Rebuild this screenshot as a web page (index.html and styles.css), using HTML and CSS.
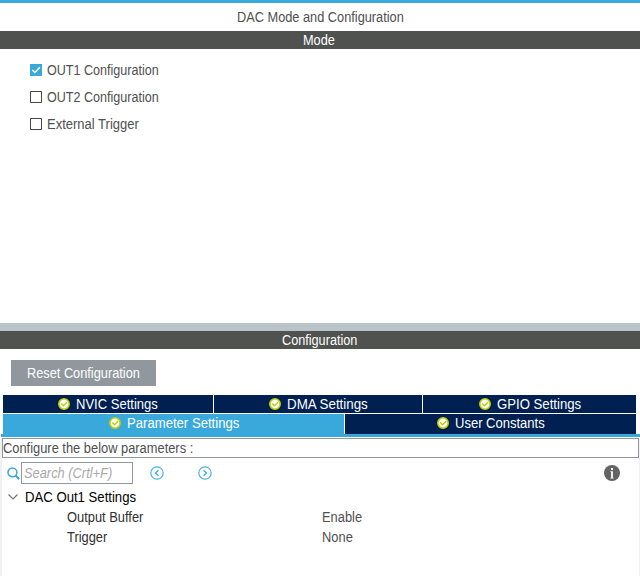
FILE: index.html
```html
<!DOCTYPE html>
<html lang="en">
<head>
<meta charset="utf-8">
<title>DAC Mode and Configuration</title>
<link rel="stylesheet" href="styles.css">
</head>
<body>
<svg class="defs" width="0" height="0">
  <symbol id="ok" viewBox="0 0 12 12"><circle cx="6" cy="6" r="5.2" fill="#fff" stroke="#bccf00" stroke-width="1.6"/><path d="M3.2 5.4 5.5 7.7 9 4.3" fill="none" stroke="#bccf00" stroke-width="1.4"/></symbol>
</svg>
<main class="panel">
  <h1 class="title"><span>DAC Mode and Configuration</span></h1>
  <h2 class="bar bar-mode"><span>Mode</span></h2>
  <section class="mode">
    <label class="option out"><svg class="box" viewBox="0 0 12 12"><path fill="#39a9dc" d="M0 0h12v12H0z"/><path d="m2.3 6 2.5 2.5L9.8 3.4" fill="none" stroke="#fff" stroke-width="1.5"/></svg><span>OUT1 Configuration</span></label>
    <label class="option out"><svg class="box" viewBox="0 0 12 12"><path fill="#fff" stroke="#464646" d="M.5.5h11v11H.5z"/></svg><span>OUT2 Configuration</span></label>
    <label class="option ext"><svg class="box" viewBox="0 0 12 12"><path fill="#fff" stroke="#464646" d="M.5.5h11v11H.5z"/></svg><span>External Trigger</span></label>
  </section>
  <div class="splitter"></div>
  <h2 class="bar bar-config"><span>Configuration</span></h2>
  <section class="config">
    <button class="reset"><span>Reset Configuration</span></button>
    <nav class="tabs">
      <div class="row row-top">
        <div class="tab nvic"><svg class="ok"><use href="#ok"/></svg><span>NVIC Settings</span></div>
        <div class="tab dma"><svg class="ok"><use href="#ok"/></svg><span>DMA Settings</span></div>
        <div class="tab gpio"><svg class="ok"><use href="#ok"/></svg><span>GPIO Settings</span></div>
      </div>
      <div class="row row-bottom">
        <div class="tab param"><svg class="ok"><use href="#ok"/></svg><span>Parameter Settings</span></div>
        <div class="tab user"><svg class="ok"><use href="#ok"/></svg><span>User Constants</span></div>
      </div>
    </nav>
    <div class="content">
      <p class="hint"><span>Configure the below parameters :</span></p>
      <div class="tools">
        <svg class="search-icon" viewBox="0 0 12 12"><circle cx="5" cy="5" r="4.1" fill="none" stroke="#39a9dc" stroke-width="1.4"/><path d="m7.9 7.9 3.4 3.4" stroke="#39a9dc" stroke-width="1.9"/></svg>
        <div class="search"><span>Search (Crtl+F)</span></div>
        <svg class="prev" viewBox="0 0 14 14"><circle cx="7" cy="7" r="6.2" fill="none" stroke="#4db2e0" stroke-width="1.2"/><path d="M8.4 4.2 5.5 7l2.9 2.8" fill="none" stroke="#39a9dc" stroke-width="1.3"/></svg>
        <svg class="next" viewBox="0 0 14 14"><circle cx="7" cy="7" r="6.2" fill="none" stroke="#4db2e0" stroke-width="1.2"/><path d="M5.6 4.2 8.5 7 5.6 9.8" fill="none" stroke="#39a9dc" stroke-width="1.3"/></svg>
        <svg class="info" viewBox="0 0 16 16"><circle cx="8" cy="8" r="8" fill="#646464"/><path fill="#fff" d="M7 3h2v2H7zM6.400 6.200h2.500v6.500h.8v.8H6.400v-.8h.7V7h-.7z"/></svg>
      </div>
      <div class="group"><svg class="chevron" viewBox="0 0 10 6"><path d="m.5.5 4.500 4.500L9.500.5" fill="none" stroke="#777" stroke-width="1.2"/></svg><span>DAC Out1 Settings</span></div>
      <div class="entry"><div class="key"><span>Output Buffer</span></div><div class="value"><span>Enable</span></div></div>
      <div class="entry"><div class="key"><span>Trigger</span></div><div class="value"><span>None</span></div></div>
    </div>
  </section>
</main>
</body>
</html>
```
FILE: styles.css
```css
* { box-sizing: border-box; }
body { margin: 0; background: #fff; font: 14px/18px "Liberation Sans", Arial, sans-serif; color: #505050; }
h1, h2, p { margin: 0; font-size: inherit; font-weight: 400; }
svg { display: block; flex: none; }
/* Labels are slightly condensed; --w is the horizontal scale. */
span { display: inline-block; transform: scaleX(var(--w, .92)); transform-origin: 0 50%; }
.defs { display: none; }
.panel { display: flex; flex-direction: column; height: 576px; overflow: hidden; border-top: 3px solid #39a9dc; white-space: nowrap; }
.title { --w: .912; height: 28px; flex: none; padding: 5px 0 0 237px; }
.bar { height: 18px; flex: none; background: #505250; color: #fff; }
.bar-mode { --w: .91; padding-left: 303px; }
.bar-config { --w: .905; padding-left: 282px; }
.mode { height: 274px; flex: none; padding: 12px 0 0 30px; }
.option { display: flex; align-items: center; gap: 5px; height: 18px; margin-bottom: 9px; }
.out { --w: .897; }
.ext { --w: .929; }
.box { width: 12px; height: 12px; }
.splitter { height: 8px; flex: none; background: #b8c4ca; }
.config { flex: none; }
.reset { --w: .912; display: block; width: 145px; height: 26px; margin: 11px 0 9px 11px; padding: 0 0 0 16px; border: 0; background: #90989e; color: #fff; font: inherit; text-align: left; }
.tabs { border-bottom: 3px solid #39a9dc; margin-left: 1px; padding: 0 3px 0 2px; color: #fff; }
.row { display: grid; column-gap: 1px; }
.row-top { grid-template: 18px / 210px 208px 213px; margin-bottom: 1px; }
.row-bottom { grid-template: 20px / 341px 291px; }
.tab { display: flex; align-items: center; gap: 6px; background: #002052; }
.row-bottom .tab { padding-bottom: 2px; }
.ok { width: 12px; height: 12px; }
.nvic { --w: .93; padding-left: 55px; }
.dma { --w: .952; padding-left: 55px; }
.gpio { --w: .94; padding-left: 56px; }
.param { --w: .937; padding-left: 106px; background: #39a9dc; }
.user { --w: .93; padding-left: 92px; }
.content { height: 139px; margin-top: 1px; border-left: 2px solid #f0f1f2; border-right: 1px solid #f0f1f2; }
.hint { --w: .919; height: 20px; border: 1px solid #90989e; }
.tools { display: flex; align-items: center; height: 22px; margin-top: 4px; padding-left: 5px; }
.search-icon { width: 13px; height: 13px; margin-right: 1px; }
.search { --w: .918; width: 112px; height: 22px; border: 1px solid #90989e; color: #aaa; font-style: italic; padding: 1px 0 0 2px; }
.prev { width: 14px; height: 14px; margin-left: 17px; }
.next { width: 14px; height: 14px; margin-left: 34px; }
.info { width: 16px; height: 16px; margin-left: 392px; }
.group { --w: .939; display: flex; align-items: center; gap: 7px; height: 20px; margin-top: 3px; padding-left: 6px; color: #000; }
.chevron { width: 10px; height: 6px; }
.entry { display: flex; height: 20px; padding: 1px 0 0 65px; }
.key { width: 255px; color: #323232; }
```
